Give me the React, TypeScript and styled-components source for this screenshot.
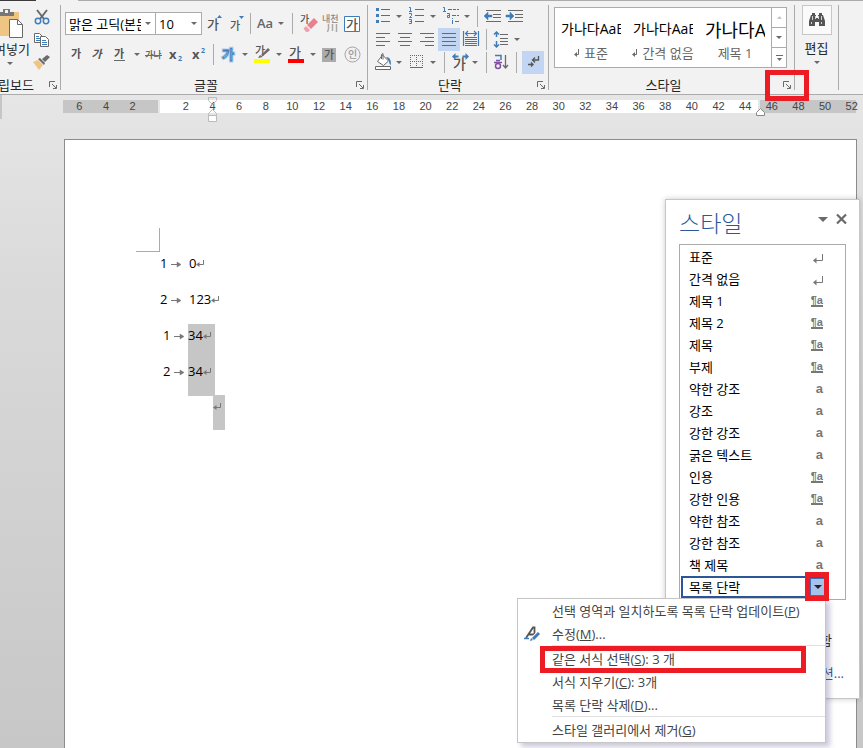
import React from "react";
import styled, { createGlobalStyle, css } from "styled-components";

const GREY = "#6a6a6a";
const BLUE = "#3f7cb8";
const LINE = "#ababab";
const RED = "#ed1c24";

const GlobalStyle = createGlobalStyle`
  * { box-sizing: border-box; }
  body {
    margin: 0;
    font: 13px/22px "Open Sans", "Noto Sans CJK KR", sans-serif;
    color: #262626;
  }
  button, select {
    font: inherit;
    color: inherit;
    margin: 0;
    padding: 0;
    border: 0;
    background: none;
  }
  svg { display: block; flex: none; overflow: visible; }
  ul { list-style: none; margin: 0; padding: 0; }
`;

/* ---------- layout ---------- */

const Window = styled.div`
  display: flex;
  flex-direction: column;
  min-height: 100vh;
  overflow: hidden;
  background: linear-gradient(#e6e6e6 95px, #dadada 280px, #c7c7c7 748px);
`;

const TabEdge = styled.div`
  height: 1px;
  background: linear-gradient(to right, #3b3b3b 36px, #f2f2f2 36px 78px, ${LINE} 78px);
`;

const Ribbon = styled.header`
  display: flex;
  height: 94px;
  padding: 4px 0;
  background: #f2f2f2;
  border-bottom: 1px solid ${LINE};
`;

const Group = styled.section<{ $w: number }>`
  flex: 0 0 ${(p) => p.$w}px;
  min-width: 0;
  display: flex;
  flex-direction: column;
  border-right: 1px solid ${LINE};
`;

const GroupBody = styled.div<{ $top?: number }>`
  flex: 1;
  padding: ${(p) => p.$top ?? 0}px 4px 0;
`;

const GroupFooter = styled.div<{ $end?: boolean }>`
  position: relative;
  display: flex;
  justify-content: ${(p) => (p.$end ? "flex-end" : "center")};
  padding-right: ${(p) => (p.$end ? 26 : 16)}px;
  height: 14px;
  line-height: 18px;
  white-space: nowrap;
`;

const Launcher = styled.button`
  position: absolute;
  right: 3px;
  top: 5px;
`;

const Callout = styled.span`
  position: absolute;
  border: 5px solid ${RED};
  pointer-events: none;
`;

const LauncherCallout = styled(Callout)`
  right: -15px;
  top: -6px;
  width: 44px;
  height: 31px;
  z-index: 2;
`;

const ToolRow = styled.div<{ $gap?: number }>`
  display: flex;
  align-items: center;
  height: 23px;
  margin-bottom: ${(p) => p.$gap ?? 0}px;
`;

const Tool = styled.button<{ $w: number; $on?: boolean }>`
  flex: 0 0 ${(p) => p.$w}px;
  display: flex;
  align-items: center;
  justify-content: center;
  height: 23px;
  color: #555;
  background: ${(p) => (p.$on ? "#c2d5f2" : "transparent")};
`;

const Separator = styled.span<{ $w: number }>`
  flex: 0 0 ${(p) => p.$w}px;
  height: 21px;
  background: linear-gradient(${LINE}, ${LINE}) center / 1px 100% no-repeat;
`;

const Combo = styled.label<{ $w: number }>`
  flex: 0 0 ${(p) => p.$w}px;
  min-width: 0;
  display: flex;
  align-items: center;
  height: 23px;
  padding: 0 4px 0 3px;
  border: 1px solid ${LINE};
  background: #fff;
  & + & { border-left: 0; }
`;

const ComboSelect = styled.select`
  flex: 1 1 0;
  width: 0;
  min-width: 0;
  height: 21px;
  margin-right: 4px;
  appearance: none;
  color: #000;
  overflow: hidden;
  white-space: nowrap;
`;

/* ---------- clipboard ---------- */

const ClipboardBody = styled.div`
  flex: 1;
  display: flex;
  justify-content: space-between;
  padding-right: 4px;
`;

const PasteButton = styled.button`
  width: 30px;
  display: flex;
  flex-direction: column;
  align-items: flex-end;
  padding-top: 2px;
`;

const PasteLabel = styled.span`
  line-height: 22px;
  white-space: nowrap;
`;

const PasteArrow = styled.span`
  padding: 2px 17px 0 0;
`;

const ClipboardTools = styled.div`
  display: flex;
  flex-direction: column;
`;

const ClipboardTool = styled(Tool)`
  width: 23px;
  margin-right: 3px;
`;

/* ---------- styles gallery ---------- */

const Gallery = styled.div`
  display: flex;
  width: 233px;
  height: 61px;
  margin: 2px 0 0 1px;
  border: 1px solid ${LINE};
  background: #fff;
`;

const GalleryItem = styled.button`
  flex: 1;
  min-width: 0;
  padding: 0 6px 4px;
`;

const Preview = styled.span<{ $large?: boolean }>`
  display: block;
  height: 34px;
  line-height: ${(p) => (p.$large ? 42 : 40)}px;
  font-size: ${(p) => (p.$large ? 18 : 14)}px;
  text-align: left;
  color: #000;
  overflow: hidden;
  white-space: nowrap;
`;

const ItemName = styled.span`
  display: flex;
  align-items: center;
  justify-content: center;
  gap: 4px;
  height: 20px;
  line-height: 20px;
  color: #666;
  white-space: nowrap;
`;

const GalleryScroll = styled.div`
  flex: 0 0 15px;
  display: flex;
  flex-direction: column;
  border-left: 1px solid ${LINE};
`;

const ScrollButton = styled.button`
  flex: 1;
  display: flex;
  align-items: center;
  justify-content: center;
  & + & { border-top: 1px solid ${LINE}; }
`;

const EditButton = styled.button`
  display: flex;
  flex-direction: column;
  align-items: center;
  width: 100%;
`;

const EditIcon = styled.span`
  display: flex;
  align-items: center;
  justify-content: center;
  width: 30px;
  height: 30px;
  border: 1px solid #c6c6c6;
  background: #fafafa;
`;

const EditLabel = styled.span`
  line-height: 26px;
`;

/* ---------- ruler ---------- */

const RulerBar = styled.div`
  position: relative;
  margin: 5px 7px 0 63px;
  height: 13px;
  background: linear-gradient(
    to right,
    #c6c6c6 95px,
    #e6e6e6 95px 97px,
    #fff 97px calc(100% - 98px),
    #e6e6e6 calc(100% - 98px) calc(100% - 96px),
    #c6c6c6 calc(100% - 96px)
  );
`;

const RulerLabels = styled.div`
  display: grid;
  grid-template-columns: repeat(30, 1fr);
  margin: 0 -9px 0 3px;
  font: 11px/13px "Liberation Sans", sans-serif;
  color: #444;
  text-align: center;
`;

const RulerMarker = styled.span<{ $side: "left" | "right" }>`
  position: absolute;
  ${(p) =>
    p.$side === "left"
      ? css`left: 145px; top: -3px;`
      : css`right: 90px; top: 8px;`}
`;

const RulerEdge = styled.div`
  width: 2px;
  height: 24px;
  margin: -18px 0 0;
  background: #c6c6c6;
`;

/* ---------- document ---------- */

const Page = styled.main`
  flex: 1;
  position: relative;
  margin: 20px 6px 0 64px;
  border: 1px solid #8c8c8c;
  border-bottom: 0;
  background: #fff;
  padding: 88px 0 0 95px;
`;

const MarginCorner = styled.div`
  width: 24px;
  height: 24px;
  margin-left: -24px;
  border: solid ${LINE};
  border-width: 0 1px 1px 0;
`;

const Paragraph = styled.div<{ $nested?: boolean }>`
  display: flex;
  height: 36px;
  line-height: 22px;
  color: #000;
  padding-left: ${(p) => (p.$nested ? 3 : 0)}px;
`;

const ListNumber = styled.span<{ $w: number }>`
  flex: 0 0 ${(p) => p.$w}px;
  display: flex;
  align-items: center;
  height: 22px;
  gap: 4px;
  svg { margin-top: 2px; }
`;

const Run = styled.span<{ $selected?: boolean }>`
  display: flex;
  align-items: flex-start;
  height: 36px;
  padding-right: 4px;
  background: ${(p) => (p.$selected ? "#c6c6c6" : "transparent")};
  svg { margin-top: 7px; }
`;

const EmptyParagraph = styled.div`
  width: 12px;
  height: 35px;
  margin-left: 53px;
  margin-top: -1px;
  padding-top: 7px;
  background: #c6c6c6;
`;

/* ---------- styles pane ---------- */

const Pane = styled.aside`
  position: absolute;
  right: -4px;
  top: 59px;
  width: 195px;
  height: 500px;
  padding: 9px 13px 0;
  border: 1px solid #c6c6c6;
  background: #fff;
  box-shadow: 0 0 6px rgba(0, 0, 0, 0.2);
`;

const PaneHeader = styled.div`
  display: flex;
  align-items: flex-start;
  height: 35px;
  margin-right: -5px;
`;

const PaneTitle = styled.h2`
  flex: 1;
  margin: 0;
  font-size: 23px;
  line-height: 28px;
  font-weight: 300;
  color: #2b579a;
`;

const PaneButton = styled.button`
  padding: 5px 4px;
  height: 20px;
  display: flex;
  align-items: center;
`;

const StyleList = styled.ul`
  width: 167px;
  padding: 1px;
  border: 1px solid ${LINE};
  color: #000;
`;

const StyleRow = styled.li`
  position: relative;
`;

const StyleButton = styled.button<{ $active?: boolean }>`
  display: flex;
  align-items: center;
  justify-content: space-between;
  width: 100%;
  height: 22px;
  padding: 0 21px 0 8px;
  line-height: 20px;
  text-align: left;
  ${(p) =>
    p.$active &&
    css`
      width: 146px;
      padding: 0 0 0 6px;
      border: 2px solid #2b579a;
    `}
`;

const Kind = styled.span<{ $linked?: boolean }>`
  font: bold 13px/14px "Liberation Sans", sans-serif;
  color: #777;
  ${(p) =>
    p.$linked &&
    css`
      font-size: 11px;
      line-height: 10px;
      border-bottom: 2px solid #777;
    `}
`;

const DropButton = styled.span`
  display: flex;
  align-items: center;
  justify-content: center;
  width: 15px;
  height: 18px;
  border: 1px solid #3f6fb5;
  background: #a6c1ea;
`;

const DropCallout = styled(Callout)`
  left: 124px;
  top: -4px;
  width: 24px;
  height: 29px;
  z-index: 3;
`;

const PaneFooter = styled.div`
  display: flex;
  flex-direction: column;
  align-items: flex-end;
  padding: 29px 14px 0 0;
  line-height: 22px;
`;

const OptionsLink = styled.a`
  margin: 11px -12px 0 0;
  color: #2b579a;
  text-decoration: none;
`;

/* ---------- context menu ---------- */

const Menu = styled.div`
  position: absolute;
  top: 22px;
  right: 18px;
  width: 309px;
  z-index: 2;
  padding: 0 0 1px;
  border: 1px solid #c6c6c6;
  background: #fff;
  box-shadow: 4px 4px 5px rgba(90, 80, 140, 0.3);
  color: #444;
`;

const MenuItem = styled.button`
  display: flex;
  align-items: center;
  width: 100%;
  height: 23px;
  text-align: left;
  white-space: nowrap;
`;

const MenuIcon = styled.span`
  flex: 0 0 34px;
  padding-left: 6px;
`;

const MenuLine = styled.hr`
  margin: 0 0 1px 34px;
  border: 0;
  border-top: 1px solid #e1e1e1;
`;

const MenuCallout = styled(Callout)`
  left: 22px;
  top: 47px;
  width: 266px;
  height: 27px;
`;

/* ---------- icons ---------- */

const Caret = ({ color = GREY, w = 6 }: { color?: string; w?: number }) => (
  <svg width={w} height={w / 2} viewBox="0 0 6 3"><path d="M0 0h6L3 3z" fill={color} /></svg>
);

const Hangul = ({ x, y, size, fill = "#555", weight = 500, children = "가" }: {
  x: number; y: number; size: number; fill?: string; weight?: number; children?: string;
}) => (
  <text x={x} y={y} fontSize={size} fill={fill} fontWeight={weight} fontFamily="Noto Sans CJK KR, sans-serif">{children}</text>
);

const LauncherIcon = () => (
  <svg width="8" height="8" viewBox="0 0 8 8" fill="none" stroke={GREY}>
    <path d="M.5 6V.5H6M3 3l4 4M7.500 4v3.500H4" />
  </svg>
);

const PasteIcon = () => (
  <svg width="30" height="31" viewBox="0 0 30 31">
    <path d="M0 5h19v24H0z" fill="#efc583" />
    <path d="M0 5h3V2h7v3h4v4H0z" fill="#777" />
    <path d="M5 3h3v3H5z" fill="#f2f2f2" />
    <path d="M9.500 12.500h8l5 5v13h-13z" fill="#fff" stroke={GREY} />
    <path d="M17.500 12.500v5h5" fill="none" stroke={GREY} />
  </svg>
);

const CutIcon = () => (
  <svg width="16" height="16" viewBox="0 0 16 16" fill="none">
    <path d="M3 1l7 9M13 1L6 10" stroke={GREY} strokeWidth="2" />
    <circle cx="4" cy="12" r="2.700" stroke={BLUE} strokeWidth="1.500" />
    <circle cx="12" cy="12" r="2.700" stroke={BLUE} strokeWidth="1.500" />
  </svg>
);

const CopyIcon = () => (
  <svg width="16" height="15" viewBox="0 0 16 15" fill="#fff" stroke={GREY}>
    <path d="M.5 1.500h5l3 3v6h-8z" />
    <path d="M2 4.500h3M2 6.500h4M2 8.500h4" stroke={BLUE} />
    <path d="M6.500 4.500h5l3 3v7h-8z" />
    <path d="M8 8.500h4M8 10.500h5M8 12.500h5" stroke={BLUE} />
  </svg>
);

const BrushIcon = () => (
  <svg width="17" height="15" viewBox="0 0 17 15">
    <path d="M0 7l5-2 5 5-4 5z" fill="#efc583" />
    <path d="M5 4l2-1 5 5-1 2zM9 4l5-4 3 2-5 5z" fill={GREY} />
  </svg>
);

const GrowIcon = ({ down }: { down?: boolean }) => (
  <svg width="17" height="19" viewBox="0 0 17 19">
    <Hangul x={1} y={down ? 16 : 15} size={down ? 11 : 13}>가</Hangul>
    <path d={down ? "M10 2h5l-2.500 3z" : "M11 4h5l-2.500-3z"} fill={BLUE} />
  </svg>
);

const EraserIcon = () => (
  <svg width="18" height="19" viewBox="0 0 18 19">
    <Hangul x={0} y={9} size={10}>가</Hangul>
    <path d="M7 11l7-7 4 4-7 7z" fill="#e8808e" />
    <path d="M3.500 14.500L6 12l4 4-2 2H6z" fill="#f0a0aa" />
  </svg>
);

const RubyIcon = () => (
  <svg width="16" height="19" viewBox="0 0 16 19">
    <Hangul x={0} y={8} size={9} fill="#888">내천</Hangul>
    <path d="M6.500 10v5l-1 3M10.500 10v7M14.500 10v8" fill="none" stroke="#aaa" strokeWidth="1.500" />
  </svg>
);

const BoxedIcon = () => (
  <svg width="16" height="16" viewBox="0 0 16 16">
    <path d="M.5.5h15v15H.5z" fill="#fff" stroke={BLUE} />
    <Hangul x={2} y={13} size={13}>가</Hangul>
  </svg>
);

const AaIcon = () => (
  <svg width="16" height="12" viewBox="0 0 16 12">
    <text x="0" y="10" fontSize="13" fontWeight="600" fontFamily="Open Sans, sans-serif" fill="#666">Aa</text>
  </svg>
);

const BoldIcon = () => <svg width="13" height="14" viewBox="0 0 13 14"><Hangul x={1} y={10} size={11} weight={700}>가</Hangul></svg>;
const ItalicIcon = () => (
  <svg width="14" height="14" viewBox="0 0 14 14"><g transform="skewX(-14)"><Hangul x={3} y={10} size={11} weight={700}>가</Hangul></g></svg>
);
const UnderlineIcon = () => (
  <svg width="13" height="16" viewBox="0 0 13 16"><Hangul x={1} y={11} size={11} weight={700}>가</Hangul><path d="M1 13.500h11" stroke={GREY} /></svg>
);
const StrikeIcon = () => (
  <svg width="17" height="12" viewBox="0 0 17 12">
    <Hangul x={0} y={9} size={9}>가나</Hangul><path d="M0 6.500h17" stroke={GREY} />
  </svg>
);
const ScriptIcon = ({ sup }: { sup?: boolean }) => (
  <svg width="15" height="16" viewBox="0 0 15 16" fontFamily="Open Sans, sans-serif" fontWeight="700">
    <text x="1" y="12" fontSize="13" fill="#555">x</text>
    <text x="10" y={sup ? 6 : 14} fontSize="7" fill={BLUE}>2</text>
  </svg>
);

const EffectIcon = () => (
  <svg width="15" height="16" viewBox="0 0 15 16">
    <text x="1" y="12" fontSize="13" fontWeight="500" fontFamily="Noto Sans CJK KR, sans-serif" fill="#fff" stroke="#b4d2ef" strokeWidth="3">가</text>
    <text x="1" y="12" fontSize="13" fontWeight="500" fontFamily="Noto Sans CJK KR, sans-serif" fill="#fff" stroke={BLUE}>가</text>
  </svg>
);

const ColourIcon = ({ colour, pen }: { colour: string; pen?: boolean }) => (
  <svg width="16" height="17" viewBox="0 0 16 17">
    <Hangul x={1} y={pen ? 9 : 11} size={pen ? 11 : 13}>가</Hangul>
    {pen && <path d="M14 2l2 2-7 6-2-1zM6 9l3 2-5 1z" fill={GREY} />}
    <path d="M0 13h16v4H0z" fill={colour} />
  </svg>
);

const ShadedIcon = () => (
  <svg width="14" height="14" viewBox="0 0 14 14"><path d="M0 0h14v14H0z" fill="#ababab" /><Hangul x={2} y={11} size={11}>가</Hangul></svg>
);

const CircledIcon = () => (
  <svg width="17" height="17" viewBox="0 0 17 17">
    <circle cx="8.500" cy="8.500" r="7.500" fill="none" stroke="#aaa0aa" />
    <Hangul x={4} y={12} size={10} fill="#999">인</Hangul>
  </svg>
);

const BulletsIcon = () => (
  <svg width="16" height="17" viewBox="0 0 16 17">
    <path d="M1 0h3v3H1zM1 6h3v3H1zM1 12h3v3H1z" fill={BLUE} />
    <path d="M6 1.500h9M6 7.500h9M6 13.500h9" stroke={GREY} />
  </svg>
);

const NumberingIcon = () => (
  <svg width="17" height="17" viewBox="0 0 17 17">
    <g fill="none" stroke={BLUE}>
      <path d="M1 -.5h1.500V3.500M1 3.500h3M1 5.500h2.500v2l-2 2H4M1 11.500h2.500v4H1M1.500 13.500h2" />
    </g>
    <path d="M7 1.500h9M7 7.500h9M7 13.500h9" stroke={GREY} />
  </svg>
);

const MultiIcon = () => (
  <svg width="17" height="17" viewBox="0 0 17 17">
    <g fill="none" stroke={BLUE}>
      <path d="M1 -.5h1.500V3.500M1 3.500h3M5 5.500h2.500v4H5.500v-2H8M10.500 10v1M10.500 12v4" />
    </g>
    <path d="M6 1.500h4M11 1.500h3M15 1.500h2M10 7.500h4M15 7.500h2M13 13.500h4" stroke={GREY} />
  </svg>
);

const IndentIcon = ({ out }: { out?: boolean }) => (
  <svg width="17" height="12" viewBox="0 0 17 12">
    <path d="M1 -.5h15M8 3.500h8M8 6.500h8M1 10.500h15" stroke={GREY} />
    <path
      d={out ? "M-1 5l4-4v3h4v2H3v3z" : "M7 5L3 1v3h-4v2h4v3z"}
      fill={BLUE}
      stroke={BLUE}
      strokeWidth=".5"
    />
  </svg>
);

const AlignIcon = ({ d }: { d: string }) => (
  <svg width="14" height="13" viewBox="0 0 14 13"><path d={d} stroke={GREY} /></svg>
);

const DistributeIcon = () => (
  <svg width="16" height="17" viewBox="0 0 16 17" fill="none">
    <path d="M.5 0v15M15.500 0v15M3 2.500h10M5 0L2.500 2.500 5 5M11 0l2.500 2.500L11 5" stroke={BLUE} strokeWidth="1.200" />
    <path d="M2 6.500h12M2 8.500h12M2 10.500h12M2 12.500h12M2 14.500h12" stroke={GREY} />
  </svg>
);

const SpacingIcon = () => (
  <svg width="16" height="17" viewBox="0 0 16 17" fill="none">
    <path d="M3.500 1v5M1 3.500L3.500 1 6 3.500M3.500 10v6M1 13.500L3.500 16 6 13.500" stroke={BLUE} strokeWidth="1.500" />
    <path d="M7 3.500h8M7 7.500h8M7 10.500h8M7 13.500h8" stroke={GREY} />
  </svg>
);

const FillIcon = () => (
  <svg width="17" height="17" viewBox="0 0 17 17" fill="none">
    <path d="M7.500 1l6 6-5 4.500-6-4z" fill="#fff" stroke={GREY} />
    <path d="M6.500 5V.5L8-.5v6" stroke={GREY} />
    <path d="M11 3c4 0 5 3 5 8-1-1-2-1-2-4z" fill={BLUE} />
    <path d="M.5 12.500h15v3H.5z" fill="#fff" stroke={GREY} />
  </svg>
);

const BorderIcon = () => (
  <svg width="14" height="16" viewBox="0 0 14 16" fill="none" stroke={GREY}>
    <path d="M1.500 0v13M7.500 0v13M13.500 0v13M1 .5h13M1 6.500h13" strokeDasharray="1 1" />
    <path d="M1 12.500h13" />
  </svg>
);

const ScaleIcon = () => (
  <svg width="17" height="19" viewBox="0 0 17 19">
    <path d="M0 3.500L3.500 0v2.500h3v2h-3V7zM17 3.500L13.500 0v2.500h-3v2h3V7z" fill={BLUE} />
    <Hangul x={1} y={16} size={14}>가</Hangul>
  </svg>
);

const SortIcon = () => (
  <svg width="15" height="18" viewBox="0 0 15 18" fill="none">
    <path d="M1 1.500h6V6" stroke={BLUE} strokeWidth="1.500" />
    <path d="M0 8.500h8M2 6.500h4" stroke="#8050a8" strokeWidth="1.300" />
    <circle cx="4" cy="12" r="2.500" stroke="#8050a8" strokeWidth="1.500" />
    <path d="M11.500 1v13M9 11l2.500 3 2.500-3" stroke={GREY} strokeWidth="1.300" />
  </svg>
);

const MarksIcon = () => (
  <svg width="13" height="15" viewBox="0 0 13 15" fill="none" stroke="#555">
    <path d="M11.500 1v4H6M8 2.500L5.500 5 8 7.500M1 9.500h5M4 7.500l2 2-2 2" strokeWidth="1.300" />
  </svg>
);

const ReturnMark = () => (
  <svg width="8" height="8" viewBox="0 0 8 8" fill="none" stroke="#777">
    <path d="M7.500 1v4.500H1" /><path d="M0 5.500L3.500 3v5z" fill="#777" stroke="none" />
  </svg>
);

const ParagraphMark = () => (
  <svg width="10" height="11" viewBox="0 0 10 11" fill="none" stroke="#777">
    <path d="M9.500 2v6.500H1" /><path d="M0 8.500L3.500 5.500v6z" fill="#777" stroke="none" />
  </svg>
);

const SmallReturn = () => (
  <svg width="6" height="8" viewBox="0 0 6 8"><path d="M4.500 0v5.500H2" fill="none" stroke={GREY} /><path d="M0 5.500L3 3v5z" fill={GREY} /></svg>
);

const TabMark = () => (
  <svg width="10" height="7" viewBox="0 0 10 7"><path d="M0 3.500h7" stroke="#777" /><path d="M6 1l4 2.500L6 6z" fill="#777" stroke="#777" strokeWidth=".5" /></svg>
);

const BinocularsIcon = () => (
  <svg width="16" height="14" viewBox="0 0 16 14" fill="#555">
    <path d="M3 0h3v2H3zM10 0h3v2h-3zM2 2h5v3h2V2h5l2 6v5h-6V9H6v4H0V8z" />
    <path d="M3.500 3v4M12.500 3v4M2.500 9v2M12.500 9v2M6.500 3v3M9.500 3v3" stroke="#f4f4f4" strokeWidth=".8" />
  </svg>
);

const CloseIcon = () => (
  <svg width="11" height="10" viewBox="0 0 11 10"><path d="M1 .5l9 9M10 .5l-9 9" stroke={GREY} strokeWidth="2.200" /></svg>
);

const ModifyIcon = () => (
  <svg width="17" height="16" viewBox="0 0 17 16" fill="none">
    <path d="M2 12L9 1.500h1.500V12M5 8.500h6" stroke="#555" strokeWidth="1.800" />
    <path d="M0 12.500h5" stroke={BLUE} strokeWidth="1.500" />
    <path d="M15 7L8 14" stroke="#fff" strokeWidth="5" />
    <path d="M15 7l-6 6" stroke={BLUE} strokeWidth="3" />
    <path d="M6 15l1-3 2 2z" fill={BLUE} />
  </svg>
);

/* ---------- data ---------- */

type StyleKind = "para" | "linked" | "char";

const STYLES: [string, StyleKind][] = [
  ["표준", "para"],
  ["간격 없음", "para"],
  ["제목 1", "linked"],
  ["제목 2", "linked"],
  ["제목", "linked"],
  ["부제", "linked"],
  ["약한 강조", "char"],
  ["강조", "char"],
  ["강한 강조", "char"],
  ["굵은 텍스트", "char"],
  ["인용", "linked"],
  ["강한 인용", "linked"],
  ["약한 참조", "char"],
  ["강한 참조", "char"],
  ["책 제목", "char"],
];

const RULER = Array.from({ length: 30 }, (_, i) => Math.abs(i * 2 - 6));

const LINES = [
  { n: 1, text: "0" },
  { n: 2, text: "123" },
  { n: 1, text: "34", selected: true },
  { n: 2, text: "34", selected: true },
];

const ALIGN = {
  left: "M0 .5h14M0 4.500h9M0 8.500h14M0 12.500h9",
  center: "M0 .5h14M2 4.500h10M0 8.500h14M2 12.500h10",
  right: "M0 .5h14M5 4.500h9M0 8.500h14M5 12.500h9",
  justify: "M0 .5h14M0 4.500h14M0 8.500h14M0 12.500h14",
};

const More = ({ w, label }: { w: number; label: string }) => (
  <Tool $w={w} aria-label={label}><Caret /></Tool>
);

/* ---------- sections ---------- */

const ClipboardGroup = () => (
  <Group $w={61}>
    <ClipboardBody>
      <PasteButton>
        <PasteIcon />
        <PasteLabel>붙여넣기</PasteLabel>
        <PasteArrow><Caret /></PasteArrow>
      </PasteButton>
      <ClipboardTools>
        <ClipboardTool $w={23} aria-label="잘라내기"><CutIcon /></ClipboardTool>
        <ClipboardTool $w={23} aria-label="복사"><CopyIcon /></ClipboardTool>
        <ClipboardTool $w={23} aria-label="서식 복사"><BrushIcon /></ClipboardTool>
      </ClipboardTools>
    </ClipboardBody>
    <GroupFooter $end>
      클립보드
      <Launcher aria-label="클립보드 옵션"><LauncherIcon /></Launcher>
    </GroupFooter>
  </Group>
);

const FontGroup = () => (
  <Group $w={307}>
    <GroupBody $top={7}>
      <ToolRow $gap={8}>
        <Combo $w={91}>
          <ComboSelect aria-label="글꼴" defaultValue="m"><option value="m">맑은 고딕(본문)</option></ComboSelect>
          <Caret />
        </Combo>
        <Combo $w={46}>
          <ComboSelect aria-label="글꼴 크기" defaultValue="10"><option value="10">10</option></ComboSelect>
          <Caret />
        </Combo>
        <Tool $w={24} aria-label="글꼴 크게"><GrowIcon /></Tool>
        <Tool $w={22} aria-label="글꼴 작게"><GrowIcon down /></Tool>
        <Separator $w={5} />
        <Tool $w={23} aria-label="대/소문자"><AaIcon /></Tool>
        <More w={10} label="대/소문자 바꾸기" />
        <Separator $w={12} />
        <Tool $w={21} aria-label="서식 지우기"><EraserIcon /></Tool>
        <Tool $w={22} aria-label="윗주 달기"><RubyIcon /></Tool>
        <Tool $w={22} aria-label="문자 테두리"><BoxedIcon /></Tool>
      </ToolRow>
      <ToolRow>
        <Tool $w={22} aria-label="굵게"><BoldIcon /></Tool>
        <Tool $w={21} aria-label="기울임꼴"><ItalicIcon /></Tool>
        <Tool $w={22} aria-label="밑줄"><UnderlineIcon /></Tool>
        <More w={13} label="밑줄 종류" />
        <Tool $w={21} aria-label="취소선"><StrikeIcon /></Tool>
        <Tool $w={23} aria-label="아래 첨자"><ScriptIcon /></Tool>
        <Tool $w={22} aria-label="위 첨자"><ScriptIcon sup /></Tool>
        <Separator $w={8} />
        <Tool $w={23} aria-label="텍스트 효과"><EffectIcon /></Tool>
        <More w={9} label="텍스트 효과 종류" />
        <Tool $w={25} aria-label="텍스트 강조 색"><ColourIcon colour="#ffff00" pen /></Tool>
        <More w={9} label="강조 색 선택" />
        <Tool $w={25} aria-label="글꼴 색"><ColourIcon colour="#ff0000" /></Tool>
        <More w={9} label="글꼴 색 선택" />
        <Tool $w={24} aria-label="문자 음영"><ShadedIcon /></Tool>
        <Tool $w={22} aria-label="원 문자"><CircledIcon /></Tool>
      </ToolRow>
    </GroupBody>
    <GroupFooter>
      글꼴
      <Launcher aria-label="글꼴 옵션"><LauncherIcon /></Launcher>
    </GroupFooter>
  </Group>
);

const ParagraphGroup = () => (
  <Group $w={181}>
    <GroupBody>
      <ToolRow>
        <Tool $w={22} aria-label="글머리 기호"><BulletsIcon /></Tool>
        <More w={10} label="글머리 기호 종류" />
        <Tool $w={24} aria-label="번호 매기기"><NumberingIcon /></Tool>
        <More w={10} label="번호 종류" />
        <Tool $w={24} aria-label="다단계 목록"><MultiIcon /></Tool>
        <More w={10} label="다단계 목록 종류" />
        <Separator $w={10} />
        <Tool $w={22} aria-label="내어쓰기"><IndentIcon out /></Tool>
        <Tool $w={22} aria-label="들여쓰기"><IndentIcon /></Tool>
      </ToolRow>
      <ToolRow>
        <Tool $w={22} aria-label="왼쪽 맞춤"><AlignIcon d={ALIGN.left} /></Tool>
        <Tool $w={22} aria-label="가운데 맞춤"><AlignIcon d={ALIGN.center} /></Tool>
        <Tool $w={22} aria-label="오른쪽 맞춤"><AlignIcon d={ALIGN.right} /></Tool>
        <Tool $w={22} $on aria-label="양쪽 맞춤"><AlignIcon d={ALIGN.justify} /></Tool>
        <Tool $w={22} aria-label="균등 분할"><DistributeIcon /></Tool>
        <Separator $w={8} />
        <Tool $w={22} aria-label="줄 간격"><SpacingIcon /></Tool>
        <More w={10} label="줄 간격 선택" />
      </ToolRow>
      <ToolRow>
        <Tool $w={22} aria-label="음영"><FillIcon /></Tool>
        <More w={10} label="음영 색" />
        <Tool $w={24} aria-label="테두리"><BorderIcon /></Tool>
        <More w={10} label="테두리 종류" />
        <Separator $w={12} />
        <Tool $w={20} aria-label="문자 모양"><ScaleIcon /></Tool>
        <More w={10} label="문자 모양 종류" />
        <Separator $w={12} />
        <Tool $w={19} aria-label="정렬"><SortIcon /></Tool>
        <Separator $w={11} />
        <Tool $w={22} $on aria-label="편집 기호 표시"><MarksIcon /></Tool>
      </ToolRow>
    </GroupBody>
    <GroupFooter>
      단락
      <Launcher aria-label="단락 옵션"><LauncherIcon /></Launcher>
    </GroupFooter>
  </Group>
);

const StylesGroup = () => (
  <Group $w={246}>
    <GroupBody>
      <Gallery>
        <GalleryItem><Preview>가나다AaBb</Preview><ItemName><SmallReturn />표준</ItemName></GalleryItem>
        <GalleryItem><Preview>가나다AaBb</Preview><ItemName><SmallReturn />간격 없음</ItemName></GalleryItem>
        <GalleryItem><Preview $large>가나다AaBb</Preview><ItemName>제목 1</ItemName></GalleryItem>
        <GalleryScroll>
          <ScrollButton aria-label="위로">
            <svg width="5" height="3" viewBox="0 0 6 3"><path d="M0 3h6L3 0z" fill="#bbb" /></svg>
          </ScrollButton>
          <ScrollButton aria-label="아래로"><Caret /></ScrollButton>
          <ScrollButton aria-label="자세히">
            <svg width="7" height="6" viewBox="0 0 7 6"><path d="M0 .5h7" stroke={GREY} /><path d="M1 3h5L3.500 6z" fill={GREY} /></svg>
          </ScrollButton>
        </GalleryScroll>
      </Gallery>
    </GroupBody>
    <GroupFooter>
      스타일
      <Launcher aria-label="스타일 옵션"><LauncherIcon /></Launcher>
      <LauncherCallout />
    </GroupFooter>
  </Group>
);

const EditingGroup = () => (
  <Group $w={44}>
    <EditButton>
      <EditIcon><BinocularsIcon /></EditIcon>
      <EditLabel>편집</EditLabel>
      <Caret />
    </EditButton>
  </Group>
);

const Ruler = () => (
  <RulerBar>
    <RulerLabels>{RULER.map((n, i) => <span key={i}>{n || ""}</span>)}</RulerLabels>
    <RulerMarker $side="left">
      <svg width="10" height="25" viewBox="0 0 10 25" fill="none" stroke="#bbb">
        <path d="M.5.5h8v3l-4 4-4-4zM.5 18.500v-2l4-4 4 4v2z" />
        <path d="M.5 18.500h8v6h-8z" fill="#fff" />
      </svg>
    </RulerMarker>
    <RulerMarker $side="right">
      <svg width="10" height="8" viewBox="0 0 10 8" fill="#fff" stroke="#888"><path d="M.5 7.500v-3l4-4 4 4v3z" /></svg>
    </RulerMarker>
  </RulerBar>
);

const KindMark = ({ kind }: { kind: StyleKind }) =>
  kind === "para" ? <ParagraphMark /> : kind === "linked" ? <Kind $linked>¶a</Kind> : <Kind>a</Kind>;

const ContextMenu = () => (
  <Menu role="menu">
    <MenuItem role="menuitem"><MenuIcon /><span>선택 영역과 일치하도록 목록 단락 업데이트(<u>P</u>)</span></MenuItem>
    <MenuItem role="menuitem"><MenuIcon><ModifyIcon /></MenuIcon><span>수정(<u>M</u>)...</span></MenuItem>
    <MenuLine />
    <MenuItem role="menuitem"><MenuIcon /><span>같은 서식 선택(<u>S</u>): 3 개</span></MenuItem>
    <MenuItem role="menuitem"><MenuIcon /><span>서식 지우기(<u>C</u>): 3개</span></MenuItem>
    <MenuItem role="menuitem"><MenuIcon /><span>목록 단락 삭제(<u>D</u>)...</span></MenuItem>
    <MenuLine />
    <MenuItem role="menuitem"><MenuIcon /><span>스타일 갤러리에서 제거(<u>G</u>)</span></MenuItem>
    <MenuCallout />
  </Menu>
);

const StylesPane = () => (
  <Pane>
    <PaneHeader>
      <PaneTitle>스타일</PaneTitle>
      <PaneButton aria-label="창 옵션"><Caret w={10} /></PaneButton>
      <PaneButton aria-label="닫기"><CloseIcon /></PaneButton>
    </PaneHeader>
    <StyleList>
      {STYLES.map(([name, kind]) => (
        <StyleRow key={name}>
          <StyleButton>{name}<KindMark kind={kind} /></StyleButton>
        </StyleRow>
      ))}
      <StyleRow>
        <StyleButton $active aria-haspopup="menu">목록 단락<DropButton><Caret color="#222" w={8} /></DropButton></StyleButton>
        <ContextMenu />
        <DropCallout />
      </StyleRow>
    </StyleList>
    <PaneFooter>
      <span>연결된 스타일 사용 안 함</span>
      <OptionsLink href="#options">옵션...</OptionsLink>
    </PaneFooter>
  </Pane>
);

export default function App() {
  return (
    <Window>
      <GlobalStyle />
      <TabEdge />
      <Ribbon>
        <ClipboardGroup />
        <FontGroup />
        <ParagraphGroup />
        <StylesGroup />
        <EditingGroup />
      </Ribbon>
      <Ruler />
      <RulerEdge />
      <Page>
        <MarginCorner />
        {LINES.map((line, i) => (
          <Paragraph key={i} $nested={line.selected}>
            <ListNumber $w={line.selected ? 25 : 29}>{line.n}<TabMark /></ListNumber>
            <Run $selected={line.selected}>{line.text}<ReturnMark /></Run>
          </Paragraph>
        ))}
        <EmptyParagraph><ReturnMark /></EmptyParagraph>
        <StylesPane />
      </Page>
    </Window>
  );
}
